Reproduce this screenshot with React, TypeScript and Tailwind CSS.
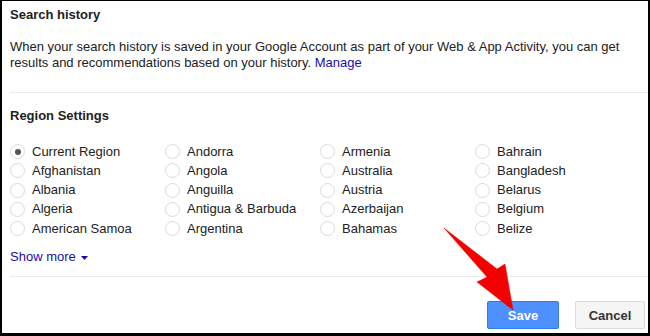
const regions = [
  ['Current Region', 'Andorra', 'Armenia', 'Bahrain'],
  ['Afghanistan', 'Angola', 'Australia', 'Bangladesh'],
  ['Albania', 'Anguilla', 'Austria', 'Belarus'],
  ['Algeria', 'Antigua & Barbuda', 'Azerbaijan', 'Belgium'],
  ['American Samoa', 'Argentina', 'Bahamas', 'Belize'],
];

function Radio({ label, checked }: { label: string; checked?: boolean }) {
  return (
    <div className="flex items-center h-[19.25px]">
      <span className="w-[15px] h-[15px] rounded-full border border-[#dadada] bg-white flex items-center justify-center shrink-0">
        {checked && <span className="w-[6px] h-[6px] rounded-full bg-[#555]" />}
      </span>
      <span className="ml-[7px] text-[13px] leading-4 text-[#222] whitespace-nowrap">{label}</span>
    </div>
  );
}

export default function App() {
  return (
    <div
      className="relative w-[650px] h-[336px] bg-white border-black border-t border-l-2 border-r-2 border-b-[3px] overflow-hidden"
      style={{ fontFamily: '"Liberation Sans", Arial, sans-serif' }}
    >
      {/* Search history */}
      <div className="pl-[8px] pt-[6px]">
        <h2 className="text-[13px] leading-4 font-bold text-[#222]">Search history</h2>
        <p className="mt-[16px] text-[13px] leading-4 text-[#222] pr-[20px]">
          When your search history is saved in your Google Account as part of your Web &amp; App Activity, you can get
          results and recommendations based on your history. <span className="text-[#1a0dab]">Manage</span>
        </p>
      </div>

      <div className="ml-[8px] mt-[21px] border-t border-[#ebebeb]" />

      {/* Region settings */}
      <div className="pl-[8px] pt-[15px]">
        <h2 className="text-[13px] leading-4 font-bold text-[#222]">Region Settings</h2>
        <div className="mt-[18px] grid grid-cols-[155px_155px_155px_155px]">
          {regions.map((row, r) =>
            row.map((name, c) => <Radio key={`${r}-${c}`} label={name} checked={r === 0 && c === 0} />)
          )}
        </div>
        <div className="mt-[11px] flex items-center text-[13px] leading-4 text-[#1a0dab]">
          Show more
          <svg width="7" height="4" viewBox="0 0 7 4" className="ml-[5px] mt-[2px]">
            <path d="M0 0h7L3.5 4z" fill="#1a0dab" />
          </svg>
        </div>
      </div>

      <div className="ml-[8px] mt-[11px] border-t border-[#ebebeb]" />

      {/* Actions */}
      <div className="flex justify-end gap-[16px] pr-[3px] pt-[24px]">
        <button className="w-[72px] h-[28px] rounded-[2px] border border-[#3079ed] bg-[#4d90fe] text-white text-[13px] font-bold">
          Save
        </button>
        <button className="w-[70px] h-[28px] rounded-[2px] border border-[#dcdcdc] bg-[#f5f5f5] text-[#333] text-[13px] font-bold">
          Cancel
        </button>
      </div>

      {/* Red arrow */}
      <svg className="absolute left-0 top-0 pointer-events-none" width="650" height="336" viewBox="0 0 650 336">
        <polygon
          points="442,227 495,268 503,263 511,309 475,281 485,276"
          fill="#f40000"
          stroke="#e00000"
          strokeWidth="0.5"
          strokeLinejoin="round"
        />
      </svg>
    </div>
  );
}
